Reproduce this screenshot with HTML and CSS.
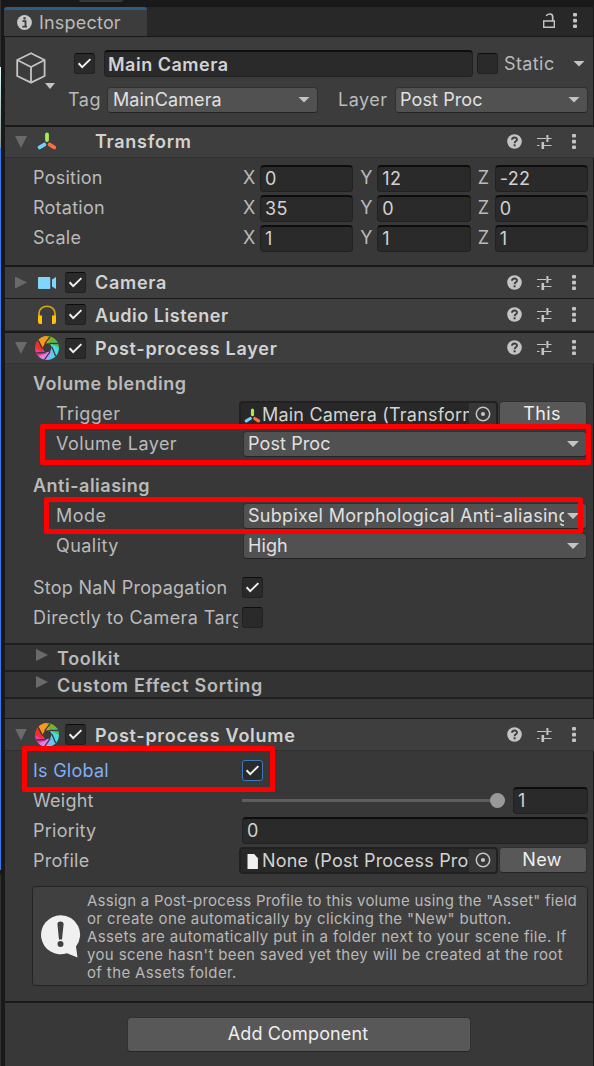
FILE: index.html
```html
<!DOCTYPE html>
<html lang="en">
<head>
<meta charset="utf-8">
<title>Inspector</title>
<link rel="stylesheet" href="styles.css">
</head>
<body>
<svg class="defs" aria-hidden="true">
  <symbol id="check" viewBox="0 0 21 21"><path d="M4.6 10.3 8.2 14.1 16.4 6.1" fill="none" stroke="#f0f0f0" stroke-width="2"/></symbol>
  <symbol id="help" viewBox="0 0 15 15"><circle cx="7.5" cy="7.5" r="7.3" fill="#c4c4c4"/><path d="M5 5.8C5 2.7 10 2.7 10 5.5 10 7.4 7.6 7.2 7.6 9.2" fill="none" stroke="#3e3e3e" stroke-width="1.9"/><rect x="6.6" y="10.3" width="2" height="2" fill="#3e3e3e"/></symbol>
  <symbol id="preset" viewBox="0 0 15 15"><path d="M0 4.5H9M10 4.5H14.5M0 11.5H2.5M5 11.5H14.5" stroke="#c4c4c4" stroke-width="1.2"/><path d="M10.4 1V8" stroke="#c4c4c4" stroke-width="2"/><path d="M5.8 8V15" stroke="#c4c4c4" stroke-width="2.6"/></symbol>
  <symbol id="dots" viewBox="0 0 4 15"><g fill="#c4c4c4"><rect x="0" y="0" width="4" height="3.6" rx="1"/><rect x="0" y="5.8" width="4" height="3.6" rx="1"/><rect x="0" y="11.4" width="4" height="3.6" rx="1"/></g></symbol>
  <symbol id="axes" viewBox="0 0 20 18"><g fill="none" stroke-width="3.8" stroke-linecap="round"><path d="M10 2.4V8" stroke="#a4ee4c"/><path d="M7.3 12.6 2.6 15.4" stroke="#74d0fb"/><path d="M12.7 12.6 17.2 15.4" stroke="#ff6f3d"/></g></symbol>
  <symbol id="shutter" viewBox="0 0 24 24">
    <path d="M12 0A12 12 0 0 1 20.5 3.5L12 8 7 1Z" fill="#83ae1e"/>
    <path d="M20.5 3.5A12 12 0 0 1 24 12L16.5 11 12 7Z" fill="#58bd62"/>
    <path d="M24 12A12 12 0 0 1 20.5 20.5L15.7 14 16 8Z" fill="#46dce4"/>
    <path d="M20.5 20.5A12 12 0 0 1 12 24L12.5 16.5 17 12Z" fill="#58cdf0"/>
    <path d="M12 24A12 12 0 0 1 3.5 20.5L10 15.5 16.5 16Z" fill="#d884f0"/>
    <path d="M3.5 20.5A12 12 0 0 1 0 12L8 12.5 12 17Z" fill="#ef3d9d"/>
    <path d="M0 12A12 12 0 0 1 3.5 3.5L9 9 7 16Z" fill="#f03030"/>
    <path d="M3.5 3.5A12 12 0 0 1 12 0L14 5 8 12Z" fill="#f59a1b"/>
    <path d="M9.8 7.6 14.4 7.3 16.9 11 15.2 15.5 10.4 16.5 7.2 12.3Z" fill="#3a3a3a"/>
    <path d="M9.8 7.6 15.2.6M14.4 7.3 23 7.5M16.9 11 20.6 20M15.2 15.5 9.4 23.8M10.4 16.5 1.4 17M7.2 12.3 3 4" stroke="#3a3a3a" stroke-width="1.3"/>
  </symbol>
  <symbol id="picker" viewBox="0 0 16 16"><circle cx="8" cy="8" r="6.7" fill="none" stroke="#c4c4c4" stroke-width="1.5"/><circle cx="8" cy="8" r="2.1" fill="#c4c4c4"/></symbol>
</svg>

<div class="window">
  <div class="scene-edge"><div class="scene-dark"></div><div class="scene-sky"></div><div class="scene-blue"></div><div class="scene-foot"></div></div>
  <main class="inspector">
    <div class="topstrip"><span class="pill"></span></div>
    <div class="tabbar">
      <div class="tab">
        <svg class="info" viewBox="0 0 15 15"><circle cx="7.5" cy="7.5" r="7.4" fill="#c8c8c8"/><path d="M5.5 6.2H8.5V11.5M5.3 11.7H10" fill="none" stroke="#3c3c3c" stroke-width="1.8"/><rect x="6.4" y="2.3" width="2.3" height="2.2" fill="#3c3c3c"/></svg>
        <span>Inspector</span>
      </div>
      <svg class="lock" viewBox="0 0 12 15"><path d="M.7 8H11.3V14.3H.7Z" fill="none" stroke="#c4c4c4" stroke-width="1.4"/><path d="M9.7 8V4C9.7 .2 4.5 .2 3.3 3" fill="none" stroke="#c4c4c4" stroke-width="1.7"/></svg>
      <svg class="dots"><use href="#dots"/></svg>
    </div>

    <header class="object">
      <svg class="cube" viewBox="0 0 40 38"><g fill="none" stroke="#c4c4c4" stroke-width="1.8" stroke-linejoin="round"><path d="M15 1.2 28.6 8V24L15 30.6 1.2 24V8Z"/><path d="M1.2 8 15 15 28.6 8M15 15V30.6"/></g><path d="M29 31H39L34 37Z" fill="#c4c4c4"/></svg>
      <div class="object-rows">
        <div class="object-name">
          <span class="box"><svg><use href="#check"/></svg></span>
          <span class="field name">Main Camera</span>
          <span class="box"></span>
          <span class="static">Static</span>
          <i class="caret"></i>
        </div>
        <div class="object-tags">
          <span class="tag-label">Tag</span>
          <span class="drop tag"><span class="drop-text">MainCamera</span><i class="caret"></i></span>
          <span class="layer-label">Layer</span>
          <span class="drop layer"><span class="drop-text">Post Proc</span><i class="caret"></i></span>
        </div>
      </div>
    </header>

    <section class="comp">
      <div class="head thick">
        <i class="fold open"></i><svg class="ico axes"><use href="#axes"/></svg><span class="nobox"></span><b>Transform</b>
        <svg class="help"><use href="#help"/></svg><svg class="preset"><use href="#preset"/></svg><svg class="dots"><use href="#dots"/></svg>
      </div>
      <div class="body transform">
        <div class="row"><span class="label">Position</span><span class="ax">X</span><span class="field">0</span><span class="ax">Y</span><span class="field">12</span><span class="ax">Z</span><span class="field">-22</span></div>
        <div class="row"><span class="label">Rotation</span><span class="ax">X</span><span class="field">35</span><span class="ax">Y</span><span class="field">0</span><span class="ax">Z</span><span class="field">0</span></div>
        <div class="row"><span class="label">Scale</span><span class="ax">X</span><span class="field">1</span><span class="ax">Y</span><span class="field">1</span><span class="ax">Z</span><span class="field">1</span></div>
      </div>
    </section>

    <section class="comp">
      <div class="head thick collapsed">
        <i class="fold"></i>
        <svg class="ico" viewBox="0 0 24 24"><rect x="3" y="6" width="12.3" height="12" rx="1" fill="#80d5fb"/><path d="M21 6V18L17 15.5V8.5Z" fill="#80d5fb"/></svg>
        <span class="box"><svg><use href="#check"/></svg></span><b>Camera</b>
        <svg class="help"><use href="#help"/></svg><svg class="preset"><use href="#preset"/></svg><svg class="dots"><use href="#dots"/></svg>
      </div>
      <div class="head audio">
        <i class="fold none"></i>
        <svg class="ico" viewBox="0 0 24 24"><path d="M4 14V10.5C4 .8 20 .8 20 10.5V14" fill="none" stroke="#d9a31b" stroke-width="1.7"/><path d="M3 12.5H7V21H5Q3 21 3 19ZM17 12.5H21V19Q21 21 19 21H17Z" fill="#ffc107"/></svg>
        <span class="box"><svg><use href="#check"/></svg></span><b>Audio Listener</b>
        <svg class="help"><use href="#help"/></svg><svg class="preset"><use href="#preset"/></svg><svg class="dots"><use href="#dots"/></svg>
      </div>
    </section>

    <section class="comp">
      <div class="head thick layer-head">
        <i class="fold open"></i><svg class="ico"><use href="#shutter"/></svg><span class="box"><svg><use href="#check"/></svg></span><b>Post-process Layer</b>
        <svg class="help"><use href="#help"/></svg><svg class="preset"><use href="#preset"/></svg><svg class="dots"><use href="#dots"/></svg>
      </div>
      <div class="body layer-body">
        <div class="row"><b>Volume blending</b></div>
        <div class="row sub"><span class="label">Trigger</span>
          <span class="objfield"><svg class="mini"><use href="#axes"/></svg><span class="obj-text">Main Camera (Transform)</span><span class="pick"><svg><use href="#picker"/></svg></span></span>
          <span class="btn">This</span></div>
        <div class="row sub"><span class="label">Volume Layer</span><span class="drop"><span class="drop-text">Post Proc</span><i class="caret"></i></span></div>
        <div class="row gap"><b>Anti-aliasing</b></div>
        <div class="row sub"><span class="label">Mode</span><span class="drop"><span class="drop-text long">Subpixel Morphological Anti-aliasing (SMAA)</span><i class="caret"></i></span></div>
        <div class="row sub"><span class="label">Quality</span><span class="drop"><span class="drop-text">High</span><i class="caret"></i></span></div>
        <div class="row gap"><span class="label tight">Stop NaN Propagation</span><span class="box"><svg><use href="#check"/></svg></span></div>
        <div class="row"><span class="label clip">Directly to Camera Target</span><span class="box"></span></div>
      </div>
      <div class="subhead"><i class="fold"></i><b>Toolkit</b></div>
      <div class="subhead"><i class="fold"></i><b>Custom Effect Sorting</b></div>
      <div class="spacer"></div>
    </section>

    <section class="comp">
      <div class="head volume">
        <i class="fold open"></i><svg class="ico"><use href="#shutter"/></svg><span class="box"><svg><use href="#check"/></svg></span><b>Post-process Volume</b>
        <svg class="help"><use href="#help"/></svg><svg class="preset"><use href="#preset"/></svg><svg class="dots"><use href="#dots"/></svg>
      </div>
      <div class="body volume-body">
        <div class="row"><span class="label active">Is Global</span><span class="box focus"><svg><use href="#check"/></svg></span></div>
        <div class="row"><span class="label">Weight</span><span class="slider"><i class="knob"></i></span><span class="field weight">1</span></div>
        <div class="row"><span class="label">Priority</span><span class="field">0</span></div>
        <div class="row"><span class="label">Profile</span>
          <span class="objfield"><svg class="mini" viewBox="0 0 20 18"><path d="M4 0H12L16.5 5V18H4Z" fill="#f0f0f0"/></svg><span class="obj-text">None (Post Process Profile)</span><span class="pick"><svg><use href="#picker"/></svg></span></span>
          <span class="btn">New</span></div>
        <div class="note">
          <svg class="bubble" viewBox="0 0 40 43"><path d="M19.5 .3A19.3 19.3 0 0 1 35 31.5L36.5 42.4 26 38.2A19.5 19.5 0 1 1 19.5 .3Z" fill="#f0f0f0"/><path d="M16.4 9Q16.4 6.5 19.5 6.5T22.6 9L21 24.5H18Z" fill="#404040"/><circle cx="19.5" cy="29" r="3" fill="#404040"/></svg>
          <p><span class="lead">Assign a Post-process Profile to this volume using the "Asset" field</span><br>or create one automatically by clicking the "New" button.<br>Assets are automatically put in a folder next to your scene file. If<br>you scene hasn't been saved yet they will be created at the root<br>of the Assets folder.</p>
        </div>
      </div>
    </section>

    <footer><span class="btn add">Add Component</span></footer>
  </main>
  <div class="mark mark-layer"></div>
  <div class="mark mark-mode"></div>
  <div class="mark mark-global"></div>
</div>
</body>
</html>
```
FILE: styles.css
```css
* { box-sizing: border-box; }
body { margin: 0; background: #191919; font: 18px/24px Inter, "Liberation Sans", sans-serif; letter-spacing: 0.35px; color: #bababa; white-space: nowrap; }
b { font-weight: 600; letter-spacing: 0.5px; }
svg { display: block; flex: none; }
.defs { position: absolute; width: 0; height: 0; }
.window { position: relative; display: flex; width: 594px; height: 1066px; overflow: hidden; }
.scene-edge { display: flex; flex-direction: column; width: 1px; margin-right: 4px; }
.scene-dark { height: 67px; background: #303030; }
.scene-sky { height: 81px; background: linear-gradient(#e0ffff, #8a9494); }
.scene-blue { height: 722px; background: #3a78ee; }
.scene-foot { flex: 1; margin-top: 5px; background: #303030; }
.inspector { display: flex; flex-direction: column; width: 589px; background: #383838; border-right: 1px solid #191919; }

.topstrip { height: 7px; background: #191919; }
.pill { display: block; width: 44px; height: 2px; margin-left: 74px; background: #383838; border-radius: 0 0 3px 3px; }
.tabbar { display: flex; align-items: center; height: 30px; padding-right: 16px; background: #282828; border-bottom: 1px solid #191919; }
.tab { display: flex; align-items: center; gap: 7px; width: 143px; height: 29px; margin-left: -1px; margin-right: auto; padding: 0 0 1px 13px; background: #3c3c3c; border-top: 3px solid #2c5d87; border-radius: 3px 3px 0 0; letter-spacing: 0.2px; }
.info { width: 15px; height: 15px; }
.lock { width: 12px; height: 15px; margin: 0 18px 2px 0; }
.dots { width: 4px; height: 15px; }
.tabbar .dots { margin-bottom: 2px; }

.object { display: flex; height: 88px; padding: 13px 5px 0 11px; background: #3c3c3c; }
.cube { width: 40px; height: 38px; margin-top: 2px; }
.object-rows { flex: 1; padding-left: 12px; }
.object-name { display: flex; align-items: center; height: 27px; padding: 0 3px 0 6px; }
.object-tags { display: flex; align-items: center; height: 27px; margin-top: 9px; }
.name { flex: none; width: 369px; margin: 0 4px 0 9px; font-weight: 600; letter-spacing: 0.5px; }
.static { margin: 0 auto 0 6px; letter-spacing: 0.4px; }
.tag-label { width: 39px; letter-spacing: 0.5px; }
.tag { width: 211px; }
.layer-label { width: 57px; margin-left: 20px; letter-spacing: 0.5px; }

.box { flex: none; width: 21px; height: 21px; background: #2a2a2a; border: 1px solid #212121; border-top-color: #0d0d0d; border-radius: 3px; }
.box svg { width: 21px; height: 21px; margin: -1px; }
.focus { border-color: #3a79bb; }
.field { flex: 1; height: 27px; padding: 0 4px; line-height: 24px; background: #2a2a2a; border: 1px solid #212121; border-top: 2px solid #0d0d0d; border-radius: 4px; color: #d2d2d2; }
.field.name { flex: none; padding: 1px 0 0 3px; }
.drop { display: flex; flex: 1; align-items: center; height: 26px; padding: 0 7px 0 4px; background: #515151; border: 1px solid #303030; border-bottom-color: #242424; border-radius: 4px; color: #e0e0e0; min-width: 0; letter-spacing: 0.1px; }
.drop.tag { flex: none; padding-left: 5px; }
.drop-text { flex: 1; overflow: hidden; margin-right: 3px; }
.drop-text.long { letter-spacing: 0.3px; }
.caret { flex: none; width: 12px; height: 6px; background: #c4c4c4; clip-path: polygon(0 0, 100% 0, 50% 100%); }

.head { display: flex; align-items: center; height: 32px; padding: 0 18px 0 10px; background: #3e3e3e; border-top: 1px solid #1a1a1a; border-bottom: 1px solid #303030; margin-right: -1px; }
.head.thick { height: 33px; border-top-width: 2px; }
.head.collapsed { height: 33px; border-bottom: 0; }
.head.audio { height: 33px; }
.head.volume { height: 33px; }
.head b { margin: 0 auto 0 9px; color: #d2d2d2; letter-spacing: 0.73px; }
.head.audio b, .head.volume b, .layer-head b { padding-top: 2px; }
.head.audio b { letter-spacing: 0.55px; }
.fold { flex: none; width: 12px; height: 12px; background: #6a6a6a; clip-path: polygon(0 0, 100% 50%, 0 100%); }
.fold.open { clip-path: polygon(0 0, 100% 0, 50% 100%); }
.fold.none { visibility: hidden; }
.ico { width: 24px; height: 24px; margin: 0 6px 0 8px; }
.ico.axes { width: 20px; height: 18px; margin: 0 8px 3px 10px; }
.nobox { width: 21px; }
.help { width: 15px; height: 15px; margin-bottom: 1px; }
.preset { width: 15px; height: 15px; margin: 0 20px 1px 15px; }
.head .dots { margin-bottom: 1px; }

.body { padding: 0 5px 0 28px; }
.row { display: flex; align-items: center; height: 30px; }
.gap { margin-top: 12px; }
.label { flex: none; width: 209px; overflow: hidden; letter-spacing: 0.25px; }
.label.clip { width: 205px; margin-right: 4px; letter-spacing: 0.4px; }
.active { color: #7faef5; }
.sub { padding-left: 23px; }
.sub .label { width: 186px; letter-spacing: 0.45px; }
.sub .drop { margin: 0 1px 0 1px; }
.transform { height: 107px; padding-top: 5px; }
.ax { width: 18px; padding-left: 1px; }
.field + .ax { width: 24px; padding-left: 7px; }
.objfield { display: flex; flex: none; width: 259px; height: 27px; margin-left: -3px; padding-left: 3px; background: #282828; border: 2px solid #212121; border-radius: 4px; overflow: hidden; color: #d2d2d2; }
.mini { width: 17px; height: 15px; margin: 5px 1px 0 0; }
.obj-text { flex: 1; overflow: hidden; line-height: 24px; letter-spacing: 0.2px; }
.pick { width: 27px; background: #373737; }
.pick svg { width: 16px; height: 16px; margin: 3px 0 0 6px; }
.btn { flex: 1; height: 26px; margin: 0 1px 0 1px; padding-right: 2px; text-align: center; background: #585858; border: 1px solid #303030; border-bottom-color: #242424; border-radius: 4px; color: #eee; }
.layer-body { height: 279px; padding-top: 5px; }
.layer-body .box { margin-bottom: 1px; }
.subhead { display: flex; height: 27px; padding: 1px 0 0 31px; background: #333; border-top: 2px solid #1f1f1f; }
.subhead .fold { margin-top: 3px; }
.subhead b { margin: 1px 0 0 9px; letter-spacing: 0.7px; }
.spacer { height: 21px; border-top: 2px solid #1f1f1f; }

.volume-body { height: 250px; padding-top: 4px; }
.volume-body .label { padding-top: 2px; height: 26px; }
.slider { display: flex; align-items: center; justify-content: flex-end; width: 263px; height: 3px; background: #5e5e5e; }
.knob { width: 15px; height: 15px; border-radius: 50%; background: #999; }
.weight { margin-left: 8px; }
.note { display: flex; align-items: center; height: 100px; margin: 11px 0 0 -1px; padding: 0 7px 0 8px; background: #404040; border: 1px solid #232323; border-radius: 4px; }
.bubble { width: 40px; height: 43px; margin: 1px 6px 0 0; }
.note p { margin: 1px 0 0; font-size: 15px; line-height: 18px; letter-spacing: 0.37px; color: #b8b8b8; }
.note .lead { letter-spacing: 0.24px; }
footer { display: flex; flex: 1; padding: 14px 0 0; border-top: 2px solid #1a1a1a; }
.add { flex: none; width: 344px; height: 35px; margin-left: 122px; line-height: 31px; letter-spacing: 0.15px; }

.mark { position: absolute; border: 5px solid #f00; border-radius: 2px; }
.mark-layer { left: 40px; top: 424px; width: 551px; height: 41px; }
.mark-mode { left: 44px; top: 497px; width: 539px; height: 37px; }
.mark-global { left: 22px; top: 746px; width: 253px; height: 46px; }
```
